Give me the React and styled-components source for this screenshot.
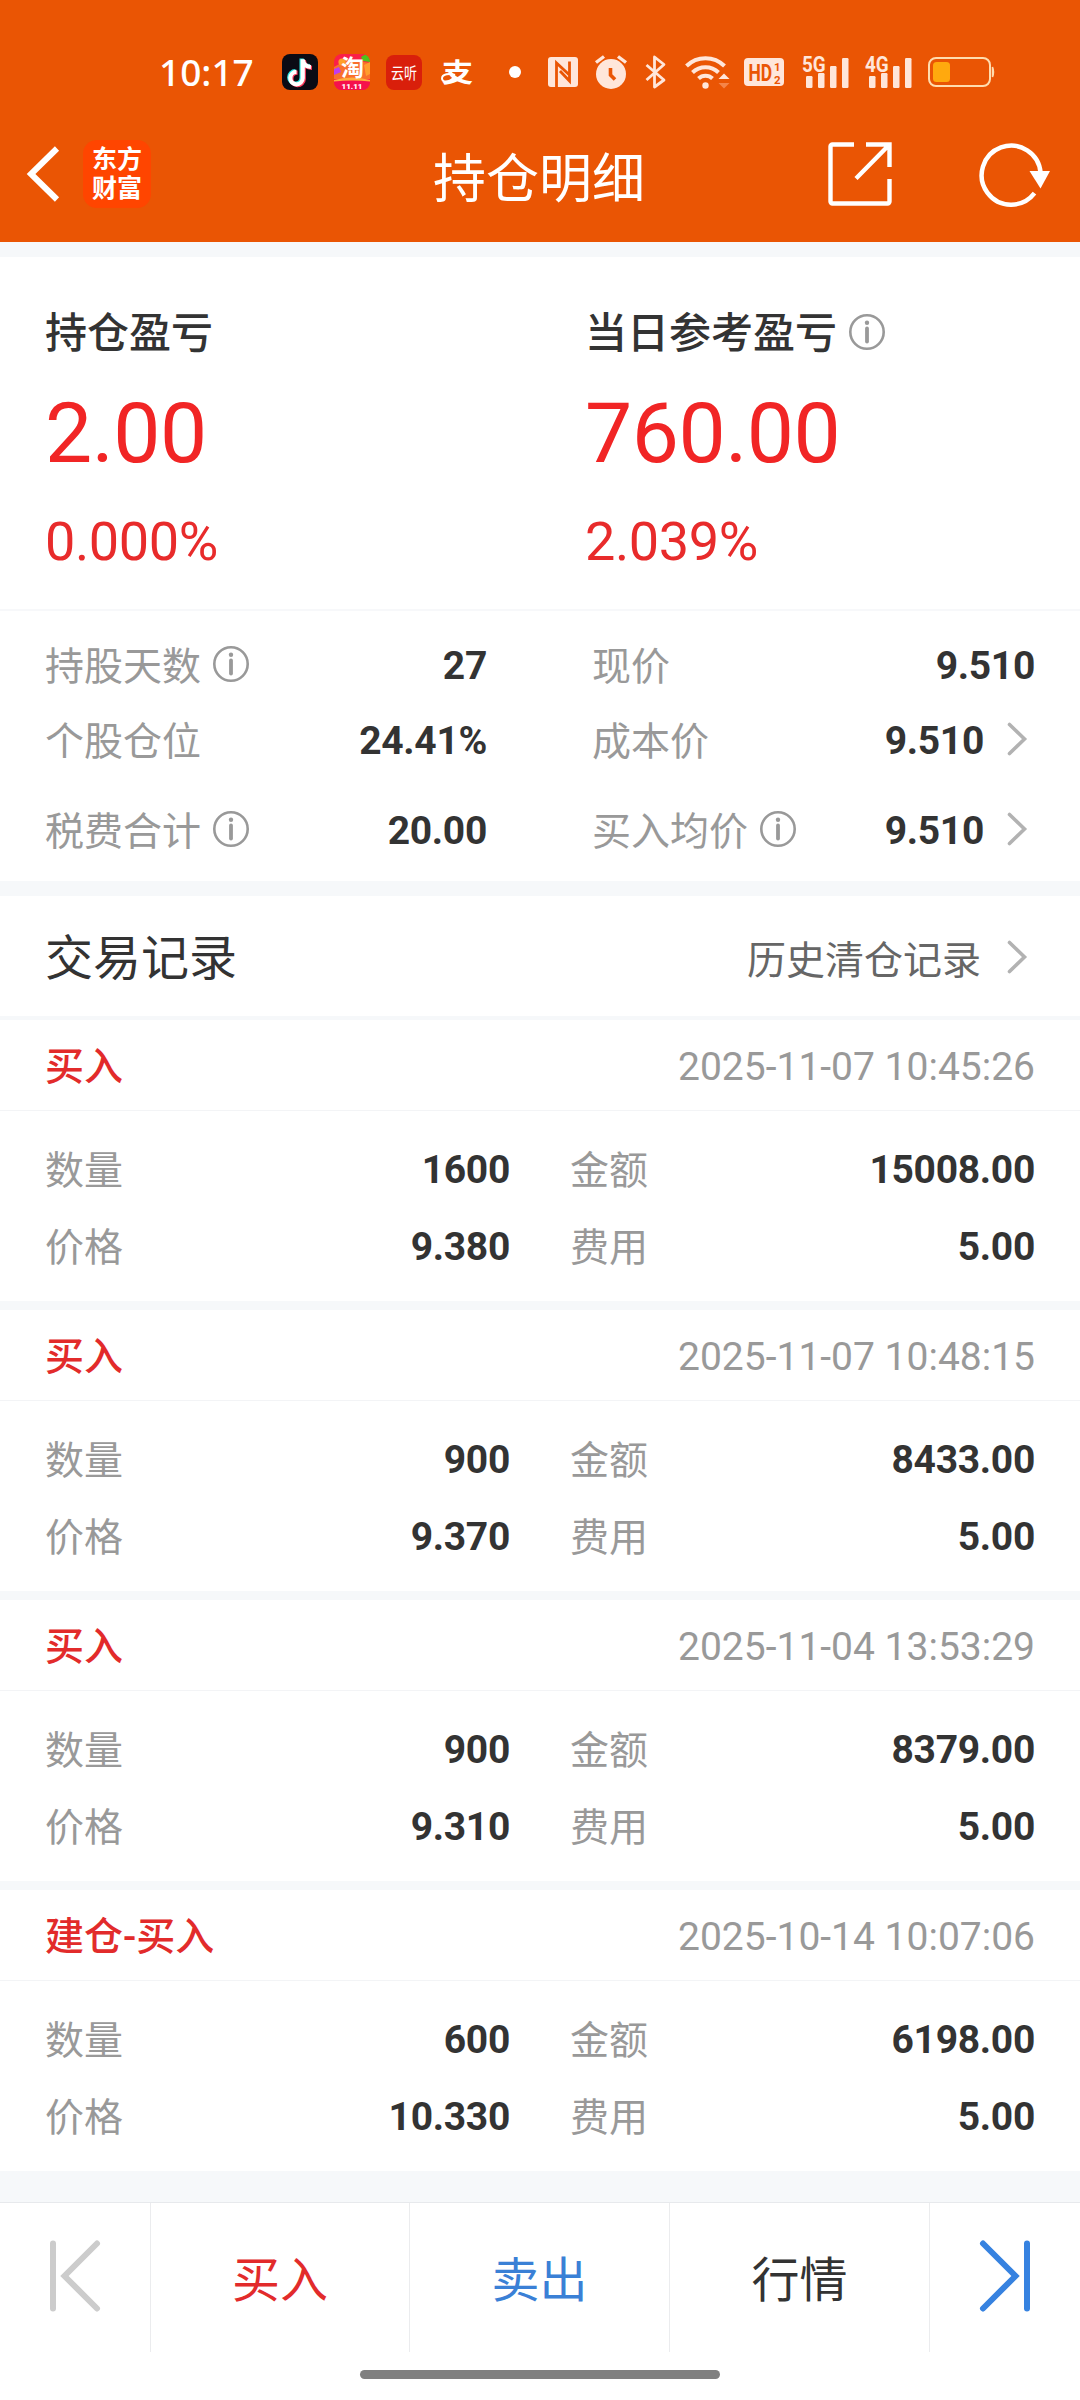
import React from 'react'
import styled, { createGlobalStyle } from 'styled-components'

const GlobalStyle = createGlobalStyle`
    * {
        box-sizing: border-box;
    }

    body {
        margin: 0;
        background: #fff;
        font-family: Roboto, 'Noto Sans CJK SC', sans-serif;
        color: #333;
    }

    svg {
        display: block;
        flex: none;
        overflow: visible;
    }
`

const Page = styled.div`
    width: 1080px;
    height: 2400px;
    display: flex;
    flex-direction: column;
    background: #fff;
    overflow: hidden;
`

const Header = styled.header`
    background: #ea5504;
    color: #fff;
`

const StatusBar = styled.div`
    height: 104px;
    padding: 40px 0 0 159px;
    display: flex;
    align-items: center;
    color: #ffe6da;
`

const Clock = styled.div`
    width: 123px;
    font: 500 37px/40px 'Noto Sans', sans-serif;
    color: #fff;
`

const StatusItem = styled.div`
    margin-right: ${props => props.$gap}px;
`

const Dot = styled.div`
    width: 12px;
    height: 12px;
    margin-right: 27px;
    border-radius: 50%;
    background: #fff;
`

const NavBar = styled.div`
    height: 138px;
    padding: 2px 28px 0 24px;
    display: grid;
    grid-template-columns: 1fr auto 1fr;
    align-items: center;
`

const NavSide = styled.div`
    display: flex;
    align-items: center;
    gap: ${props => props.$gap}px;
    justify-content: ${props => (props.$end ? 'flex-end' : 'flex-start')};
`

const Brand = styled.div`
    width: 68px;
    height: 68px;
    padding-top: 5px;
    border-radius: 14px;
    background: #ff4500;
    text-align: center;
    font-size: 25px;
    font-weight: 700;
    line-height: 29px;
`

const Title = styled.h1`
    margin: 0;
    padding: 11px 0 0 2px;
    font-size: 53px;
    font-weight: 400;
    line-height: 64px;
`

const Summary = styled.section`
    height: 354px;
    padding: 51px 45px 0;
    display: grid;
    grid-template-columns: 540px 1fr;
    border-bottom: 2px solid #f7f8fa;
`

const SummaryLabel = styled.div`
    height: 52px;
    display: flex;
    align-items: center;
    font-size: 42px;
    font-weight: 500;
    line-height: 52px;
`

const SummaryValue = styled.div`
    margin-top: 24px;
    font-size: 84px;
    line-height: 100px;
    letter-spacing: -0.5px;
    color: #f12525;
`

const SummaryRate = styled.div`
    margin-top: 26px;
    font-size: 54px;
    line-height: 64px;
    letter-spacing: -0.4px;
    color: #e82b2b;
`

const Details = styled.section`
    height: 270px;
    padding: 17px 45px 0;
`

const DetailRow = styled.div`
    height: 75px;
    margin-top: ${props => props.$offset || 0}px;
    display: grid;
    grid-template-columns: 442px 443px;
    justify-content: space-between;
    align-items: center;
`

const Cell = styled.div`
    display: flex;
    align-items: center;
    line-height: 46px;
    font-size: 39px;
`

const Label = styled.span`
    padding-top: 2px;
    color: #999;
`

const InfoMark = styled.span`
    margin-left: 12px;
    padding-bottom: 4px;
`

const Value = styled.span`
    margin-left: auto;
    padding-top: 1px;
    font-weight: 700;
    letter-spacing: -0.3px;
`

const Arrow = styled.span`
    margin-left: 24px;
    padding: 0 8px 4px 0;
`

const Band = styled.div`
    height: ${props => props.$size}px;
    flex: none;
    background: #f6f8fa;
`

const SectionHead = styled.div`
    height: 120px;
    padding: 6px 45px 0;
    display: flex;
    align-items: center;
    justify-content: space-between;
`

const SectionTitle = styled.h2`
    margin: 0;
    font-size: 48px;
    font-weight: 400;
    line-height: 60px;
`

const HistoryLink = styled.div`
    padding-top: 4px;
    display: flex;
    align-items: center;
    gap: 3px;
    font-size: 39px;
    line-height: 46px;
    color: #666;
`

const LinkArrow = styled(Arrow)`
    padding-bottom: 8px;
`

const RecordHead = styled.div`
    height: 91px;
    padding: 3px 45px 0;
    display: flex;
    align-items: center;
    justify-content: space-between;
    border-bottom: 1px solid #f3f4f6;
    font-size: 39px;
    line-height: 46px;
`

const Side = styled.span`
    padding-top: 1px;
    font-weight: 500;
    color: #e22b2b;
`

const Time = styled.span`
    color: #999;
`

const RecordBody = styled.div`
    height: 190px;
    padding: 20px 45px 0;
    display: grid;
    grid-template-columns: 465px 465px;
    grid-auto-rows: 77px;
    justify-content: space-between;
`

const TabBar = styled.nav`
    height: 150px;
    display: grid;
    grid-template-columns: 151px 259px 260px 260px 150px;
    border-top: 1px solid #e7e9ec;
`

const Tab = styled.div`
    display: flex;
    align-items: center;
    justify-content: center;
    padding: ${props => (props.$icon ? '0 0 3px' : '7px 0 0')};
    border-right: ${props => (props.$last ? 'none' : '1px solid #ebecee')};
    font-size: 48px;
    line-height: 58px;
    color: ${props => props.$color};
`

const HomeBar = styled.div`
    width: 360px;
    height: 9px;
    margin: 18px auto 0;
    border-radius: 5px;
    background: #808080;
`

const TikTokIcon = () => (
    <svg width="36" height="36" viewBox="0 0 36 36" fill="none" strokeWidth="4.200">
        <rect width="36" height="36" rx="8" fill="#0b0b14" />
        <path d="M19.600 4.500v19a6.200 6.200 0 1 1-6.200-6.400M19.800 5.500c.6 4.200 3.600 6.500 8 6.700" stroke="#2ee6e0" />
        <path d="M21.800 6.100v19a6.200 6.200 0 1 1-6.200-6.400M22 7.100c.6 4.200 3.600 6.500 8 6.700" stroke="#fb3a5c" />
        <path d="M20.700 5.300v19a6.200 6.200 0 1 1-6.200-6.400M20.900 6.300c.6 4.200 3.600 6.500 8 6.700" stroke="#fff" />
    </svg>
)

const TaobaoIcon = () => (
    <svg width="36" height="36" viewBox="0 0 36 36">
        <defs>
            <clipPath id="tb"><rect width="36" height="36" rx="8" /></clipPath>
        </defs>
        <g clipPath="url(#tb)">
            <rect width="36" height="36" fill="#fb1f48" />
            <path d="M0 13l14-8 22 4v16H0z" fill="#f9702c" />
            <path d="M27 3l5-3 4 3v5l-7-1z" fill="#4fc31b" />
            <circle cx="8" cy="8" r="3.600" fill="#ffa02a" />
            <path d="M0 15l5-2 2 5-7 3z" fill="#c03bf0" />
            <path d="M30 11l6-3v12l-4 2z" fill="#ff9d2e" />
            <path d="M0 26q18-5 36 0v2H0z" fill="#ffae3d" />
            <path d="M0 27.500q18-2 36 0V36H0z" fill="#f5114c" />
        </g>
        <text x="18.500" y="22" textAnchor="middle" fontSize="23" fontWeight="700" fill="#fff">淘</text>
        <text x="18" y="34.500" textAnchor="middle" fontSize="8" fontWeight="900" fill="#fff">11.11</text>
    </svg>
)

const RadioIcon = () => (
    <svg width="36" height="36" viewBox="0 0 36 36">
        <rect y="1" width="36" height="35" rx="8" fill="#d91f0b" />
        <text transform="translate(18 25) scale(1 1.250)" textAnchor="middle" fontSize="13" fill="#fff">云听</text>
    </svg>
)

const AlipayIcon = () => (
    <svg width="36" height="36" viewBox="0 0 36 36">
        <text transform="translate(19.500 28) scale(1.050 .880)" textAnchor="middle" fontSize="30" fontWeight="700" fill="#fff">支</text>
        <path d="M17 21c-5-2-13-1-13 3.500 0 4 7 4.500 12-1" fill="none" stroke="#fff" strokeWidth="2" />
    </svg>
)

const NfcIcon = () => (
    <svg width="30" height="30" viewBox="0 0 30 30">
        <rect width="30" height="30" rx="3" fill="currentColor" />
        <path d="M8.500 30V6l13 12M21.500 4.500V24L12 14" fill="none" stroke="#ea5504" strokeWidth="2.800" />
    </svg>
)

const AlarmIcon = () => (
    <svg width="32" height="34" viewBox="0 0 32 34" fill="none">
        <circle cx="16" cy="19" r="15" fill="currentColor" />
        <path d="M1 7.500L9 1.500M31 7.500L23 1.500" stroke="currentColor" strokeWidth="3.400" />
        <path d="M15.500 13v7l4.500 4.500" stroke="#ea5504" strokeWidth="3.600" />
    </svg>
)

const BluetoothIcon = () => (
    <svg width="22" height="34" viewBox="0 0 22 34" fill="none" stroke="currentColor" strokeWidth="2.800">
        <path d="M1.500 10L19 25l-9.500 7V2L19 9.500 1.500 25" strokeLinejoin="round" />
    </svg>
)

const WifiIcon = () => (
    <svg width="46" height="34" viewBox="0 0 46 34" fill="none" stroke="currentColor" strokeWidth="4">
        <path d="M1.500 11a27 27 0 0 1 38 0M7.500 17.500a18.500 18.500 0 0 1 26 0M13.500 23.500a10 10 0 0 1 14 0" />
        <circle cx="20.500" cy="30.500" r="3.200" fill="currentColor" stroke="none" />
        <path d="M33.500 24l5.500-5.500 5.500 5.500z" fill="currentColor" stroke="none" />
        <path d="M33.500 28l5.500 5.500 5.500-5.500z" fill="#f58549" stroke="none" />
    </svg>
)

const HdIcon = () => (
    <svg width="40" height="28" viewBox="0 0 40 28" fontWeight="700">
        <rect width="40" height="28" rx="4" fill="currentColor" />
        <g fill="#ea5504">
            <text transform="translate(4.500 22.500) scale(.760 1)" fontSize="23">HD</text>
            <text x="30" y="13" fontSize="11.500">1</text>
            <text x="30" y="25.500" fontSize="11.500">2</text>
        </g>
    </svg>
)

const SignalIcon = ({ label }) => (
    <svg width="48" height="34" viewBox="0 0 48 34" fill="currentColor">
        <text transform="translate(0 17) scale(.860 1)" fontSize="22" fontWeight="700">{label}</text>
        <rect x="4" y="21" width="6.500" height="12" rx="1.200" />
        <rect x="16" y="18" width="6.500" height="15" rx="1.200" />
        <rect x="28" y="11" width="6.500" height="22" rx="1.200" />
        <rect x="40" y="3" width="6.500" height="30" rx="1.200" />
    </svg>
)

const BatteryIcon = () => (
    <svg width="68" height="30" viewBox="0 0 68 30" fill="none">
        <rect x="1" y="1" width="61" height="28" rx="7" stroke="#ffdcae" strokeWidth="2" />
        <rect x="5" y="5" width="17" height="20" rx="3.500" fill="#ffa90e" />
        <path d="M64.500 10q2 5 0 10z" fill="#ffdcae" stroke="#ffdcae" strokeWidth="1.500" />
    </svg>
)

const BackIcon = () => (
    <svg width="36" height="56" viewBox="0 0 36 56" fill="none" stroke="#fff" strokeWidth="6">
        <path d="M33 2.500L7 28l26 25.500" />
    </svg>
)

const ShareIcon = () => (
    <svg width="64" height="64" viewBox="0 0 64 64" fill="none" stroke="#fff" strokeWidth="4.400">
        <path d="M26 2.500H4.500a2 2 0 0 0-2 2v55a2 2 0 0 0 2 2h55a2 2 0 0 0 2-2V37" />
        <path d="M38 2.500h23.500V25M61 3L28 36.500" />
    </svg>
)

const RefreshIcon = () => (
    <svg width="73" height="64" viewBox="0 0 73 64" fill="none">
        <path d="M55.500 51.200A29.500 29.500 0 1 1 61.600 31" stroke="#fff" strokeWidth="4.500" />
        <path d="M50.500 29h20.500L61.500 46.500z" fill="#fff" />
    </svg>
)

const InfoIcon = () => (
    <svg width="36" height="36" viewBox="0 0 36 36" fill="none" stroke="#999">
        <circle cx="18" cy="18" r="16.700" strokeWidth="2.600" />
        <path d="M18 14.500v13" strokeWidth="3.800" strokeLinecap="round" />
        <circle cx="18" cy="8.800" r="2.200" fill="#999" stroke="none" />
    </svg>
)

const ChevronIcon = () => (
    <svg width="19" height="32" viewBox="0 0 19 32" fill="none" stroke="#b2b2b2" strokeWidth="3.600">
        <path d="M1.500 1.500L16.500 16 1.500 30.500" strokeLinecap="round" />
    </svg>
)

const FirstIcon = () => (
    <svg width="52" height="72" viewBox="0 0 52 72" fill="none" stroke="#ccc" strokeWidth="6" strokeLinecap="round">
        <path d="M4 3.500v65M48 3.500L15.500 36 48 68.500" />
    </svg>
)

const LastIcon = () => (
    <svg width="52" height="72" viewBox="0 0 52 72" fill="none" stroke="#3682e0" strokeWidth="6" strokeLinecap="round">
        <path d="M48 3.500v65M4 3.500L36.500 36 4 68.500" />
    </svg>
)

const details = [
    [{ label: '持股天数', info: true, value: '27' }, { label: '现价', value: '9.510' }],
    [{ label: '个股仓位', value: '24.41%' }, { label: '成本价', value: '9.510', link: true }],
    [{ label: '税费合计', info: true, value: '20.00' }, { label: '买入均价', info: true, value: '9.510', link: true }],
]

const records = [
    { side: '买入', time: '2025-11-07 10:45:26', count: '1600', amount: '15008.00', price: '9.380', fee: '5.00' },
    { side: '买入', time: '2025-11-07 10:48:15', count: '900', amount: '8433.00', price: '9.370', fee: '5.00' },
    { side: '买入', time: '2025-11-04 13:53:29', count: '900', amount: '8379.00', price: '9.310', fee: '5.00' },
    { side: '建仓-买入', time: '2025-10-14 10:07:06', count: '600', amount: '6198.00', price: '10.330', fee: '5.00' },
]

//A label with its value at the right, optionally with an info mark or a link arrow
function Field({ label, value, info, link }) {
    return (
        <Cell>
            <Label>{label}</Label>
            {info ? <InfoMark><InfoIcon /></InfoMark> : null}
            <Value>{value}</Value>
            {link ? <Arrow><ChevronIcon /></Arrow> : null}
        </Cell>
    )
}

function Record({ record }) {
    return (
        <div>
            <RecordHead>
                <Side>{record.side}</Side>
                <Time>{record.time}</Time>
            </RecordHead>
            <RecordBody>
                <Field label="数量" value={record.count} />
                <Field label="金额" value={record.amount} />
                <Field label="价格" value={record.price} />
                <Field label="费用" value={record.fee} />
            </RecordBody>
        </div>
    )
}

function App() {
    return (
        <Page>
            <GlobalStyle />
            <Header>
                <StatusBar>
                    <Clock>10:17</Clock>
                    <StatusItem $gap={16}><TikTokIcon /></StatusItem>
                    <StatusItem $gap={16}><TaobaoIcon /></StatusItem>
                    <StatusItem $gap={16}><RadioIcon /></StatusItem>
                    <StatusItem $gap={35}><AlipayIcon /></StatusItem>
                    <Dot />
                    <StatusItem $gap={17}><NfcIcon /></StatusItem>
                    <StatusItem $gap={18}><AlarmIcon /></StatusItem>
                    <StatusItem $gap={18}><BluetoothIcon /></StatusItem>
                    <StatusItem $gap={13}><WifiIcon /></StatusItem>
                    <StatusItem $gap={18}><HdIcon /></StatusItem>
                    <StatusItem $gap={15}><SignalIcon label="5G" /></StatusItem>
                    <StatusItem $gap={15}><SignalIcon label="4G" /></StatusItem>
                    <BatteryIcon />
                </StatusBar>
                <NavBar>
                    <NavSide $gap={23}>
                        <BackIcon />
                        <Brand>东方<br />财富</Brand>
                    </NavSide>
                    <Title>持仓明细</Title>
                    <NavSide $gap={87} $end>
                        <ShareIcon />
                        <RefreshIcon />
                    </NavSide>
                </NavBar>
            </Header>
            <Band $size={15} />
            <Summary>
                <div>
                    <SummaryLabel>持仓盈亏</SummaryLabel>
                    <SummaryValue>2.00</SummaryValue>
                    <SummaryRate>0.000%</SummaryRate>
                </div>
                <div>
                    <SummaryLabel>当日参考盈亏<InfoMark><InfoIcon /></InfoMark></SummaryLabel>
                    <SummaryValue>760.00</SummaryValue>
                    <SummaryRate>2.039%</SummaryRate>
                </div>
            </Summary>
            <Details>
                {details.map((row, i) => (
                    <DetailRow key={i} $offset={i === 2 ? 15 : 0}>
                        {row.map(item => <Field key={item.label} {...item} />)}
                    </DetailRow>
                ))}
            </Details>
            <Band $size={15} />
            <SectionHead>
                <SectionTitle>交易记录</SectionTitle>
                <HistoryLink>历史清仓记录<LinkArrow><ChevronIcon /></LinkArrow></HistoryLink>
            </SectionHead>
            <Band $size={4} />
            {records.map((record, i) => (
                <React.Fragment key={record.time}>
                    <Record record={record} />
                    <Band $size={i === records.length - 1 ? 31 : 9} />
                </React.Fragment>
            ))}
            <TabBar>
                <Tab $icon><FirstIcon /></Tab>
                <Tab $color="#e22b2b">买入</Tab>
                <Tab $color="#3a80d6">卖出</Tab>
                <Tab $color="#333">行情</Tab>
                <Tab $icon $last><LastIcon /></Tab>
            </TabBar>
            <HomeBar />
        </Page>
    )
}

export default App
